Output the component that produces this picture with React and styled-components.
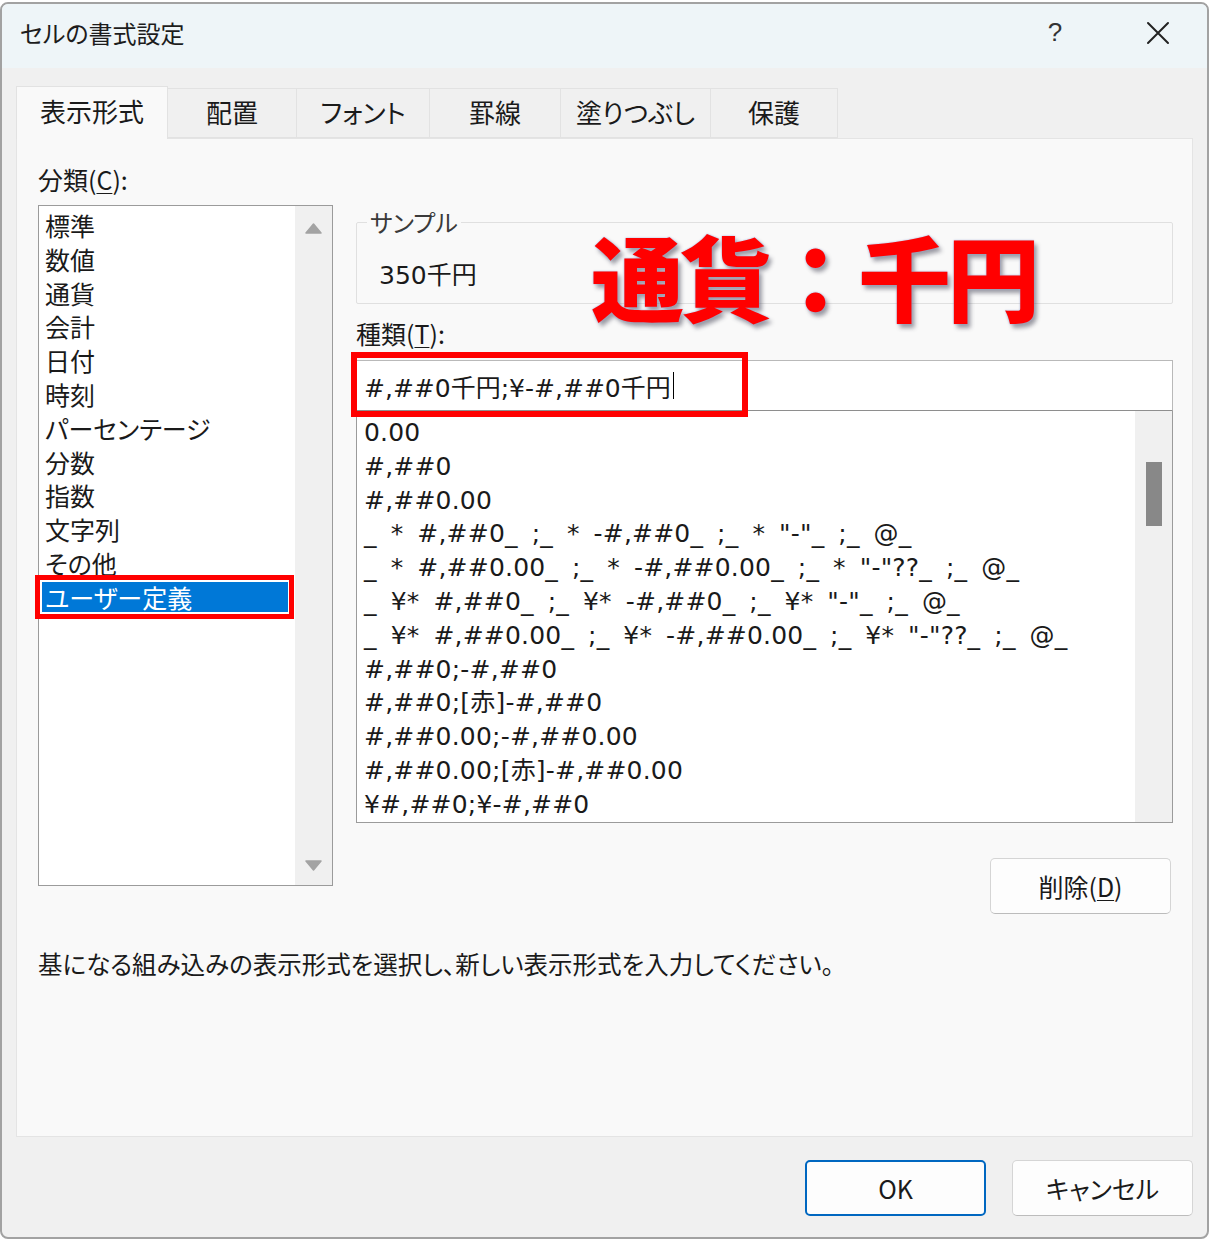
import React from "react";
import styled, { createGlobalStyle } from "styled-components";

const GlobalStyle = createGlobalStyle`
  html, body {
    margin: 0;
    padding: 0;
    background: #ffffff;
  }
  body {
    font-family: "Noto Sans CJK JP", "Noto Sans", sans-serif;
    color: #1a1a1a;
  }
`;

const monoish = `"DejaVu Sans", "Noto Sans CJK JP", sans-serif`;

const Window = styled.div`
  box-sizing: border-box;
  width: 1209px;
  height: 1237px;
  margin-top: 2px;
  border: 2px solid #a2a2a2;
  border-radius: 8px;
  overflow: hidden;
  background: #f0f0f0;
  display: flex;
  flex-direction: column;
`;

const TitleBar = styled.div`
  height: 64px;
  flex: none;
  display: flex;
  align-items: center;
  padding-left: 18px;
  padding-bottom: 7px;
  box-sizing: border-box;
  background: #eef5f8;
  font-size: 24px;
  font-feature-settings: "palt";
`;

const Title = styled.div`
  flex: 1;
  color: #1c1c1c;
`;

const TitleButton = styled.div`
  width: ${(p) => p.$w}px;
  display: flex;
  justify-content: center;
  align-items: center;
  color: #333;
  font-size: 26px;
  font-family: "Liberation Sans", sans-serif;
  font-weight: 300;
`;

const Body = styled.div`
  flex: 1;
  display: flex;
  flex-direction: column;
  padding: 18px 14px 0 14px;
`;

const TabRow = styled.div`
  display: flex;
  align-items: flex-end;
  height: 52px;
  font-feature-settings: "palt";
`;

const Tab = styled.div`
  box-sizing: border-box;
  width: ${(p) => p.$w}px;
  height: ${(p) => (p.$active ? 53 : 50)}px;
  margin-bottom: ${(p) => (p.$active ? -1 : 0)}px;
  display: flex;
  align-items: center;
  justify-content: center;
  font-size: 26px;
  color: #1a1a1a;
  background: ${(p) => (p.$active ? "#f9f9f9" : "#f0f0f0")};
  border: 1px solid #e2e2e2;
  border-bottom: ${(p) => (p.$active ? "none" : "1px solid #e2e2e2")};
  border-left: ${(p) => (p.$first ? "1px solid #e2e2e2" : "none")};
  padding-bottom: ${(p) => (p.$active ? 6 : 4)}px;
  position: relative;
  z-index: ${(p) => (p.$active ? 1 : 0)};
`;

const Panel = styled.div`
  box-sizing: border-box;
  height: 999px;
  background: #f9f9f9;
  border: 1px solid #e4e4e4;
  padding: 25px 19px 0 21px;
  position: relative;
  font-feature-settings: "palt";
  font-size: 25px;
`;

const TopRow = styled.div`
  display: flex;
  gap: 23px;
  align-items: flex-start;
`;

const LeftCol = styled.div`
  width: 295px;
  flex: none;
`;

const RightCol = styled.div`
  flex: 1;
  display: flex;
  flex-direction: column;
  padding-top: 43px;
`;

const Label = styled.div`
  line-height: 30px;
  height: 30px;
  color: #1a1a1a;
`;

const Under = styled.span`
  text-decoration: underline;
  text-underline-offset: 3px;
  text-decoration-thickness: 1px;
`;

const CategoryList = styled.div`
  box-sizing: border-box;
  margin-top: 11px;
  height: 681px;
  background: #ffffff;
  border: 1px solid #9b9b9b;
  display: flex;
`;

const CategoryItems = styled.div`
  flex: 1;
  padding: 4px 7px 0 3px;
`;

const CategoryItem = styled.div`
  position: relative;
  height: 30px;
  line-height: 30px;
  margin-bottom: 3.8px;
  padding-left: 3px;
  font-size: 25px;
  white-space: nowrap;
  color: ${(p) => (p.$selected ? "#ffffff" : "#1a1a1a")};
  background: ${(p) => (p.$selected ? "#0078d7" : "transparent")};
`;

const RedFrame = styled.div`
  position: absolute;
  top: ${(p) => p.$t}px;
  right: ${(p) => p.$r}px;
  bottom: ${(p) => p.$b}px;
  left: ${(p) => p.$l}px;
  border: ${(p) => p.$bw}px solid #ff0000;
  pointer-events: none;
`;

const ScrollTrack = styled.div`
  width: 37px;
  flex: none;
  background: #f0f0f0;
  display: flex;
  flex-direction: column;
  align-items: center;
  justify-content: ${(p) => (p.$arrows ? "space-between" : "flex-start")};
  padding: ${(p) => (p.$arrows ? "17px 0 14px" : "0")};
  box-sizing: border-box;
`;

const Arrow = styled.svg`
  width: 17px;
  height: 11px;
  display: block;
`;

const Thumb = styled.div`
  width: 16px;
  height: 64px;
  margin-top: 51px;
  background: #888888;
`;

const Fieldset = styled.fieldset`
  margin: 0;
  height: 97px;
  box-sizing: border-box;
  border: 1px solid #e0e0e0;
  border-radius: 2px;
  padding: 24px 22px 0 22px;
`;

const Legend = styled.legend`
  margin-left: -12px;
  padding: 0 3px;
  line-height: 30px;
  font-size: 24px;
  color: #3a3a3a;
`;

const SampleValue = styled.div`
  line-height: 30px;
  font-size: 25px;
  font-family: ${monoish};
  color: #1a1a1a;
`;

const TypeLabel = styled(Label)`
  margin-top: 14px;
`;

const InputWrap = styled.div`
  position: relative;
  margin-top: 12px;
`;

const FormatInput = styled.div`
  box-sizing: border-box;
  height: 51px;
  background: #ffffff;
  border: 1px solid #b9b9b9;
  border-bottom: 1px solid #8e8e8e;
  padding-left: 7px;
  display: flex;
  align-items: center;
  font-size: 25px;
  font-family: ${monoish};
  font-feature-settings: normal;
`;

const Caret = styled.span`
  display: inline-block;
  width: 1px;
  height: 27px;
  background: #000;
  margin-left: 2px;
`;

const FormatList = styled.div`
  box-sizing: border-box;
  height: 412px;
  background: #ffffff;
  border: 1px solid #9b9b9b;
  border-top: none;
  display: flex;
  overflow: hidden;
`;

const FormatItems = styled.div`
  flex: 1;
  padding: 5px 0 0 7px;
  font-feature-settings: normal;
`;

const FormatItem = styled.div`
  height: 33.8px;
  line-height: 34px;
  font-size: 25px;
  font-family: ${monoish};
  white-space: pre;
  word-spacing: 5.8px;
  letter-spacing: 0.2px;
  color: #1a1a1a;
`;

const DeleteRow = styled.div`
  display: flex;
  justify-content: flex-end;
  margin-top: 35px;
  padding-right: 2px;
`;

const Button = styled.button`
  box-sizing: border-box;
  width: 181px;
  height: 56px;
  border-radius: 5px;
  background: #fdfdfd;
  border: ${(p) => (p.$primary ? "2px solid #0067c0" : "1px solid #d5d5d5")};
  border-bottom-color: ${(p) => (p.$primary ? "#0067c0" : "#bcbcbc")};
  font-family: "Noto Sans CJK JP", "Noto Sans", sans-serif;
  font-feature-settings: "palt";
  font-size: 25px;
  color: #1a1a1a;
  padding: 0;
  cursor: pointer;
`;

const Description = styled.div`
  margin-top: 35px;
  font-size: 24.5px;
  line-height: 30px;
  color: #1a1a1a;
  white-space: nowrap;
`;

const Annotation = styled.div`
  position: absolute;
  left: 574px;
  top: 89px;
  font-size: 93px;
  font-weight: 900;
  line-height: 1;
  letter-spacing: -4px;
  font-feature-settings: normal;
  color: #ff0000;
  white-space: nowrap;
  text-shadow: 0 0 2px #9aa8d8, 3px 4px 4px rgba(40, 40, 60, 0.45);
`;

const Footer = styled.div`
  display: flex;
  justify-content: flex-end;
  gap: 26px;
  padding-top: 23px;
`;

const categories = [
  "標準",
  "数値",
  "通貨",
  "会計",
  "日付",
  "時刻",
  "パーセンテージ",
  "分数",
  "指数",
  "文字列",
  "その他",
  "ユーザー定義",
];

const formats = [
  "0.00",
  "#,##0",
  "#,##0.00",
  '_ * #,##0_ ;_ * -#,##0_ ;_ * "-"_ ;_ @_',
  '_ * #,##0.00_ ;_ * -#,##0.00_ ;_ * "-"??_ ;_ @_',
  '_ ¥* #,##0_ ;_ ¥* -#,##0_ ;_ ¥* "-"_ ;_ @_',
  '_ ¥* #,##0.00_ ;_ ¥* -#,##0.00_ ;_ ¥* "-"??_ ;_ @_',
  "#,##0;-#,##0",
  "#,##0;[赤]-#,##0",
  "#,##0.00;-#,##0.00",
  "#,##0.00;[赤]-#,##0.00",
  "¥#,##0;¥-#,##0",
];

const tabs = [
  { name: "表示形式", w: 152 },
  { name: "配置", w: 129 },
  { name: "フォント", w: 133 },
  { name: "罫線", w: 131 },
  { name: "塗りつぶし", w: 150 },
  { name: "保護", w: 127 },
];

const UpArrow = () => (
  <Arrow viewBox="0 0 17 11">
    <path d="M8.5 1 L16 10 L1 10 Z" fill="#a3a3a3" stroke="#a3a3a3" strokeLinejoin="round" strokeWidth="1.5" />
  </Arrow>
);

const DownArrow = () => (
  <Arrow viewBox="0 0 17 11">
    <path d="M1 1 L16 1 L8.5 10 Z" fill="#a3a3a3" stroke="#a3a3a3" strokeLinejoin="round" strokeWidth="1.5" />
  </Arrow>
);

const CloseIcon = () => (
  <svg width="24" height="24" viewBox="0 0 24 24">
    <path d="M2 2 L22 22 M22 2 L2 22" stroke="#222" strokeWidth="2" strokeLinecap="round" />
  </svg>
);

const App = () => {
  return (
    <>
      <GlobalStyle />
      <Window>
        <TitleBar>
          <Title>セルの書式設定</Title>
          <TitleButton $w={108}>?</TitleButton>
          <TitleButton $w={98}>
            <CloseIcon />
          </TitleButton>
        </TitleBar>
        <Body>
          <TabRow>
            {tabs.map((t, i) => (
              <Tab key={t.name} $w={t.w} $active={i === 0} $first={i === 0}>
                {t.name}
              </Tab>
            ))}
          </TabRow>
          <Panel>
            <TopRow>
              <LeftCol>
                <Label>
                  分類(<Under>C</Under>):
                </Label>
                <CategoryList>
                  <CategoryItems>
                    {categories.map((c) => (
                      <CategoryItem key={c} $selected={c === "ユーザー定義"}>
                        {c}
                        {c === "ユーザー定義" && (
                          <RedFrame $t={-7} $r={-6} $b={-7} $l={-7} $bw={5} />
                        )}
                      </CategoryItem>
                    ))}
                  </CategoryItems>
                  <ScrollTrack $arrows>
                    <UpArrow />
                    <DownArrow />
                  </ScrollTrack>
                </CategoryList>
              </LeftCol>
              <RightCol>
                <Fieldset>
                  <Legend>サンプル</Legend>
                  <SampleValue>350千円</SampleValue>
                </Fieldset>
                <TypeLabel>
                  種類(<Under>T</Under>):
                </TypeLabel>
                <InputWrap>
                  <FormatInput>
                    #,##0千円;¥-#,##0千円
                    <Caret />
                  </FormatInput>
                  <RedFrame $t={-8} $r={425} $b={-6} $l={-5} $bw={6} />
                </InputWrap>
                <FormatList>
                  <FormatItems>
                    {formats.map((f) => (
                      <FormatItem key={f}>{f}</FormatItem>
                    ))}
                  </FormatItems>
                  <ScrollTrack>
                    <Thumb />
                  </ScrollTrack>
                </FormatList>
                <DeleteRow>
                  <Button>
                    削除(<Under>D</Under>)
                  </Button>
                </DeleteRow>
              </RightCol>
            </TopRow>
            <Description>
              基になる組み込みの表示形式を選択し、新しい表示形式を入力してください。
            </Description>
            <Annotation>通貨：千円</Annotation>
          </Panel>
          <Footer>
            <Button $primary>OK</Button>
            <Button>キャンセル</Button>
          </Footer>
        </Body>
      </Window>
    </>
  );
};

export default App;
